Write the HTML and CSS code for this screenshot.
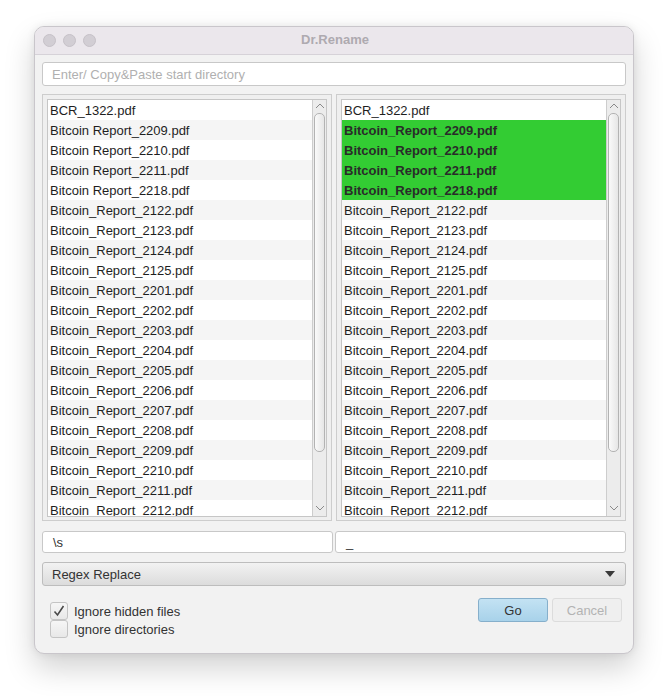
FILE: index.html
```html
<!DOCTYPE html>
<html>
<head>
<meta charset="utf-8">
<link rel="stylesheet" href="styles.css">
</head>
<body>
<div class="window">
  <div class="titlebar">
    <div class="lights"><span></span><span></span><span></span></div>
    <div class="title">Dr.Rename</div>
  </div>
  <div class="content">
    <div class="dirinput">Enter/ Copy&amp;Paste start directory</div>
    <div class="panels">
      <div class="panel">
        <div class="listbox">
          <ul class="rows">
            <li>BCR_1322.pdf</li>
            <li>Bitcoin Report_2209.pdf</li>
            <li>Bitcoin Report_2210.pdf</li>
            <li>Bitcoin Report_2211.pdf</li>
            <li>Bitcoin Report_2218.pdf</li>
            <li>Bitcoin_Report_2122.pdf</li>
            <li>Bitcoin_Report_2123.pdf</li>
            <li>Bitcoin_Report_2124.pdf</li>
            <li>Bitcoin_Report_2125.pdf</li>
            <li>Bitcoin_Report_2201.pdf</li>
            <li>Bitcoin_Report_2202.pdf</li>
            <li>Bitcoin_Report_2203.pdf</li>
            <li>Bitcoin_Report_2204.pdf</li>
            <li>Bitcoin_Report_2205.pdf</li>
            <li>Bitcoin_Report_2206.pdf</li>
            <li>Bitcoin_Report_2207.pdf</li>
            <li>Bitcoin_Report_2208.pdf</li>
            <li>Bitcoin_Report_2209.pdf</li>
            <li>Bitcoin_Report_2210.pdf</li>
            <li>Bitcoin_Report_2211.pdf</li>
            <li>Bitcoin_Report_2212.pdf</li>
          </ul>
          <div class="scrollbar">
            <svg class="arrow" width="12" height="8" viewBox="0 0 12 8"><path d="M2 6 L6 2 L10 6" fill="none" stroke="#8a8a8a" stroke-width="1"/></svg>
            <div class="thumb"></div>
            <div class="track-rest"></div>
            <svg class="arrow" width="12" height="8" viewBox="0 0 12 8"><path d="M2 2 L6 6 L10 2" fill="none" stroke="#8a8a8a" stroke-width="1"/></svg>
          </div>
        </div>
      </div>
      <div class="panel">
        <div class="listbox">
          <ul class="rows">
            <li>BCR_1322.pdf</li>
            <li class="changed">Bitcoin_Report_2209.pdf</li>
            <li class="changed">Bitcoin_Report_2210.pdf</li>
            <li class="changed">Bitcoin_Report_2211.pdf</li>
            <li class="changed">Bitcoin_Report_2218.pdf</li>
            <li>Bitcoin_Report_2122.pdf</li>
            <li>Bitcoin_Report_2123.pdf</li>
            <li>Bitcoin_Report_2124.pdf</li>
            <li>Bitcoin_Report_2125.pdf</li>
            <li>Bitcoin_Report_2201.pdf</li>
            <li>Bitcoin_Report_2202.pdf</li>
            <li>Bitcoin_Report_2203.pdf</li>
            <li>Bitcoin_Report_2204.pdf</li>
            <li>Bitcoin_Report_2205.pdf</li>
            <li>Bitcoin_Report_2206.pdf</li>
            <li>Bitcoin_Report_2207.pdf</li>
            <li>Bitcoin_Report_2208.pdf</li>
            <li>Bitcoin_Report_2209.pdf</li>
            <li>Bitcoin_Report_2210.pdf</li>
            <li>Bitcoin_Report_2211.pdf</li>
            <li>Bitcoin_Report_2212.pdf</li>
          </ul>
          <div class="scrollbar">
            <svg class="arrow" width="12" height="8" viewBox="0 0 12 8"><path d="M2 6 L6 2 L10 6" fill="none" stroke="#8a8a8a" stroke-width="1"/></svg>
            <div class="thumb"></div>
            <div class="track-rest"></div>
            <svg class="arrow" width="12" height="8" viewBox="0 0 12 8"><path d="M2 2 L6 6 L10 2" fill="none" stroke="#8a8a8a" stroke-width="1"/></svg>
          </div>
        </div>
      </div>
    </div>
    <div class="fields">
      <div class="field">\s</div>
      <div class="field">_</div>
    </div>
    <div class="select">
      <span>Regex Replace</span>
      <span class="caret"></span>
    </div>
    <div class="footer">
      <div class="checks">
        <label class="check"><span class="box checked"><svg width="16" height="16" viewBox="0 0 16 16"><path d="M3.5 8.5 L6.5 12 L12.5 3" fill="none" stroke="#4a4a4a" stroke-width="1.6"/></svg></span>Ignore hidden files</label>
        <label class="check"><span class="box"></span>Ignore directories</label>
      </div>
      <div class="buttons">
        <div class="btn go">Go</div>
        <div class="btn cancel">Cancel</div>
      </div>
    </div>
  </div>
</div>
</body>
</html>
```

FILE: styles.css
```css
* { box-sizing: border-box; }
html, body {
  margin: 0;
  padding: 0;
  background: #ffffff;
  font-family: "Liberation Sans", Arial, sans-serif;
  font-size: 13px;
  color: #222;
}
body { min-height: 696px; }
.window {
  margin: 26px 0 0 34px;
  width: 600px;
  height: 628px;
  border: 1px solid #c9c6cb;
  border-radius: 10px;
  background: #f2f2f2;
  box-shadow: 0 14px 30px rgba(0,0,0,0.18), 0 0 8px rgba(0,0,0,0.07);
  overflow: hidden;
}
.titlebar {
  height: 28px;
  background: #ebe7ec;
  border-bottom: 1px solid #d6d2d8;
  display: flex;
  align-items: center;
  position: relative;
}
.lights {
  display: flex;
  gap: 7px;
  padding-left: 8px;
}
.lights span {
  width: 13px;
  height: 13px;
  border-radius: 50%;
  background: #d2ced4;
  border: 1px solid #c5c1c7;
}
.title {
  flex: 1;
  text-align: center;
  font-weight: bold;
  color: #aeaab0;
  margin-left: -59px;
  font-size: 13px;
  padding-bottom: 2px;
}
.content {
  padding: 7px 7px 0 7px;
}
.dirinput {
  height: 24px;
  background: #fff;
  border: 1px solid #c8c8c8;
  border-radius: 3px;
  color: #b0b0b0;
  padding-left: 9px;
  line-height: 24px;
}
.panels {
  margin-top: 8px;
  display: flex;
  gap: 4px;
  height: 427px;
}
.panel {
  width: 290px;
  border: 1px solid #cdcdcd;
  background: #efefef;
  padding: 4px;
}
.listbox {
  height: 418px;
  border: 1px solid #c6c6c6;
  background: #fff;
  display: flex;
  overflow: hidden;
}
.rows {
  list-style: none;
  margin: 0;
  padding: 0;
  flex: 1;
  overflow: hidden;
}
.rows li {
  height: 20px;
  line-height: 19px;
  padding: 1px 0 0 2px;
  white-space: nowrap;
  color: #1e1e1e;
}
.rows li:nth-child(even) { background: #f5f5f5; }
.rows li.changed {
  background: #33cc33;
  font-weight: bold;
  color: #2a2a2a;
}
.scrollbar {
  width: 14px;
  border-left: 1px solid #cdcdcd;
  background: #ececec;
  display: flex;
  flex-direction: column;
  align-items: center;
}
.arrow {
  display: block;
  flex: none;
  margin-top: 2px;
}
.thumb {
  width: 11px;
  height: 339px;
  margin-top: 3px;
  border: 1px solid #b3b3b3;
  border-radius: 5px;
  background: linear-gradient(to right, #fafafa, #e6e6e6);
}
.track-rest { flex: 1; }
.scrollbar .arrow:last-child { margin: 0 0 4px 0; }
.fields {
  margin-top: 10px;
  display: flex;
  gap: 2px;
}
.field {
  flex: 1;
  height: 22px;
  background: #fff;
  border: 1px solid #c8c8c8;
  border-radius: 3px;
  padding-left: 10px;
  line-height: 21px;
  color: #333;
}
.select {
  margin-top: 9px;
  height: 24px;
  border: 1px solid #bdbdbd;
  border-radius: 3px;
  background: linear-gradient(to bottom, #f2f2f2, #dcdcdc);
  display: flex;
  align-items: center;
  justify-content: space-between;
  padding: 0 10px 0 9px;
  color: #333;
}
.caret {
  width: 0;
  height: 0;
  border-left: 5px solid transparent;
  border-right: 5px solid transparent;
  border-top: 6px solid #3a3a3a;
}
.footer {
  margin-top: 12px;
  display: flex;
  justify-content: space-between;
  align-items: flex-start;
}
.checks {
  padding: 4px 0 0 8px;
  display: flex;
  flex-direction: column;
}
.check {
  display: flex;
  align-items: center;
  height: 18px;
  color: #333;
}
.box {
  width: 18px;
  height: 18px;
  border: 1px solid #c4c4c4;
  border-radius: 3px;
  background: linear-gradient(to bottom, #f6f6f6, #e8e8e8);
  margin-right: 6px;
  display: flex;
  align-items: center;
  justify-content: center;
}
.buttons {
  display: flex;
  gap: 4px;
  padding-right: 4px;
}
.btn {
  height: 24px;
  line-height: 23px;
  text-align: center;
  border-radius: 3px;
}
.go {
  width: 70px;
  border: 1px solid #86afcb;
  background: linear-gradient(to bottom, #c3e2f3, #a8d2ea);
  color: #333;
}
.cancel {
  width: 70px;
  border: 1px solid #dcdcdc;
  background: #efefef;
  color: #b3b3b3;
}
```
